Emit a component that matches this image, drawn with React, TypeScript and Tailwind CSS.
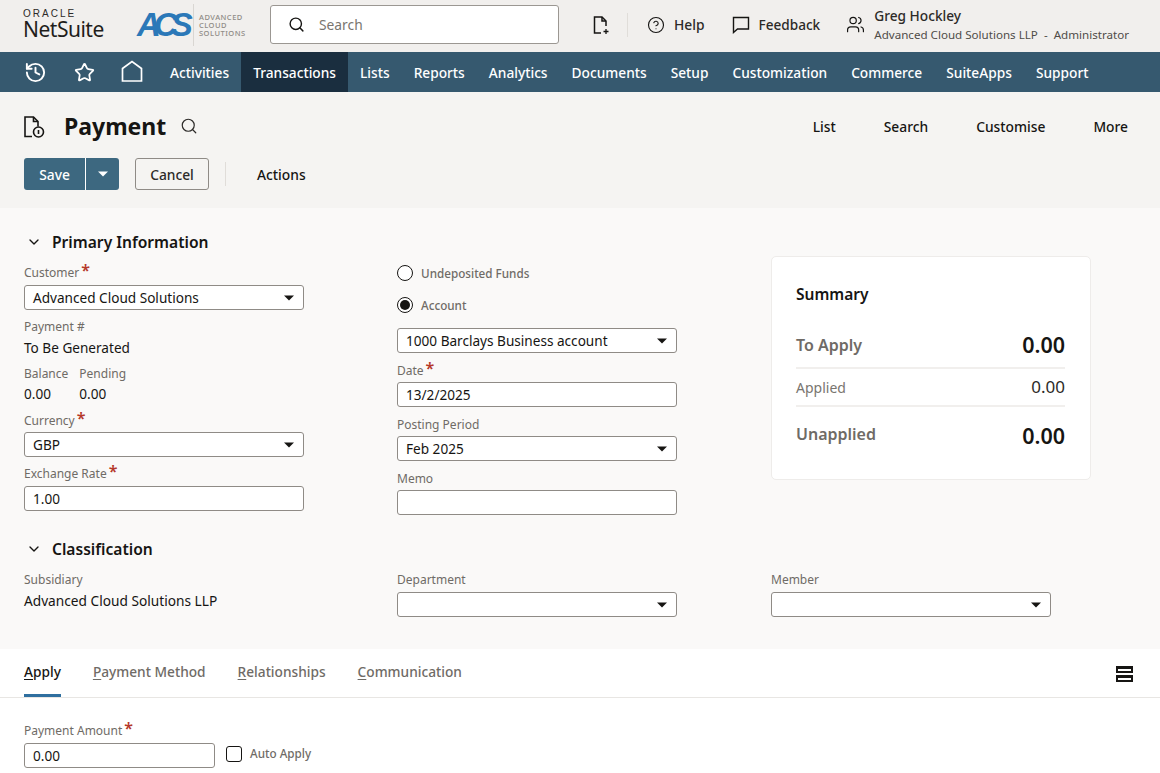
import React from "react";
import { ChevronDown, History, Search, Star, CircleHelp, Users } from "lucide-react";

const Caret = () => (
  <svg width="10" height="6" viewBox="0 0 10 6" className="shrink-0"><path d="M0 0.5h10L5 5.5z" fill="#161513" /></svg>
);

const Lbl = ({ children, req }: { children: React.ReactNode; req?: boolean }) => (
  <div className="flex h-[14px] items-center text-[12px] leading-[14px] text-[#6f6b66]">
    <span>{children}</span>
    {req && <span className="ml-[2px] -mt-[6px] text-[16px] font-semibold leading-[14px] text-[#b5382a]">*</span>}
  </div>
);

const Sel = ({ value, w = "w-[280px]" }: { value?: string; w?: string }) => (
  <div className={`${w} flex h-[25px] items-center justify-between rounded-[3px] border border-[#8f8b86] bg-white pl-2 pr-[9px] text-[13.6px] text-[#161513]`}>
    <span className="pt-[2px]">{value}</span>
    <Caret />
  </div>
);

const Inp = ({ value, w = "w-[280px]" }: { value?: string; w?: string }) => (
  <div className={`${w} flex h-[25px] items-center rounded-[3px] border border-[#8f8b86] bg-white pl-2 pt-[2px] text-[13.6px] text-[#161513]`}>{value}</div>
);

const Section = ({ title }: { title: string }) => (
  <div className="flex h-[20px] items-center">
    <ChevronDown size={16} strokeWidth={2} className="ml-[2px] text-[#161513]" />
    <span className="ml-[10px] pt-[2px] text-[15.6px] font-semibold text-[#161513]">{title}</span>
  </div>
);

const Tab = ({ first, rest, active }: { first: string; rest: string; active?: boolean }) => (
  <div className={`flex h-[48px] items-center border-b-[3px] pt-[1px] text-[13.7px] font-medium ${active ? "border-[#2f6f9f] text-[#161513]" : "border-transparent text-[#6f6b66]"}`}>
    <span><span className="underline underline-offset-2">{first}</span>{rest}</span>
  </div>
);

const navItems = ["Activities", "Transactions", "Lists", "Reports", "Analytics", "Documents", "Setup", "Customization", "Commerce", "SuiteApps", "Support"];

export default function App() {
  return (
    <div className="flex h-[773px] w-[1160px] flex-col overflow-hidden bg-white text-[#161513]" style={{ fontFamily: '"Noto Sans", "Open Sans", sans-serif' }}>
      {/* top bar */}
      <header className="flex h-[52px] shrink-0 items-center bg-[#f1efed] pb-[3px]">
        <div className="ml-[23px] flex w-[84px] flex-col">
          <span className="mb-[1px] text-[10px] leading-[9px] tracking-[2px] text-[#2c2a28]" style={{ fontFamily: '"Liberation Sans", sans-serif' }}>ORACLE</span>
          <span className="text-[21px] leading-[21px] tracking-[-0.5px] text-[#1f1d1b]">NetSuite</span>
        </div>
        <div className="ml-[30px] flex h-[46px] w-[56px] items-center">
          <span className="text-[33px] font-bold italic leading-none tracking-[-7px] text-[#2b78b8]" style={{ fontFamily: '"Liberation Sans", sans-serif' }}>ACS</span>
        </div>
        <div className="h-[42px] w-px bg-[#d9d6d2]" />
        <div className="ml-[5px] flex w-[50px] flex-col text-[7.5px] font-medium leading-[8px] tracking-[0.5px] text-[#8f8b86]">
          <span>ADVANCED</span><span>CLOUD</span><span>SOLUTIONS</span>
        </div>
        <div className="ml-[21px] flex h-[39px] w-[289px] items-center rounded-[3px] border border-[#9b9792] bg-white pl-[17px]">
          <Search size={17} strokeWidth={2} className="text-[#161513]" />
          <span className="ml-[14px] pt-[2px] text-[13.8px] text-[#79756f]">Search</span>
        </div>
        <svg width="18" height="20" viewBox="0 0 18 20" fill="none" stroke="#161513" strokeWidth="1.5" className="ml-[33px]">
          <path d="M9 18H2.5V2H10l4 4v5" /><path d="M10 2v4h4" /><path d="M14 14v5M11.5 16.500h5" strokeWidth="1.3" />
        </svg>
        <div className="ml-[17px] h-[24px] w-px bg-[#e0ddd9]" />
        <CircleHelp size={18} strokeWidth={1.5} className="ml-[19px]" />
        <span className="ml-[9px] pt-[2px] text-[13.8px] font-medium text-[#2c2a28]">Help</span>
        <svg width="18" height="18" viewBox="0 0 18 18" fill="none" stroke="#161513" strokeWidth="1.4" className="ml-[27px]">
          <path d="M1.500 1.500h15v11.500H5.500l-4 3.500z" />
        </svg>
        <span className="ml-[9px] pt-[2px] text-[13.6px] font-medium text-[#2c2a28]">Feedback</span>
        <Users size={19} strokeWidth={1.5} className="ml-[26px]" />
        <div className="ml-[9px] flex flex-col pt-[2px]">
          <span className="text-[13.7px] font-medium leading-[18px] text-[#2c2a28]">Greg Hockley</span>
          <span className="whitespace-nowrap text-[11.6px] leading-[20px] text-[#4f4c48]">Advanced Cloud Solutions LLP&nbsp; -&nbsp; Administrator</span>
        </div>
      </header>

      {/* nav */}
      <nav className="flex h-[40px] shrink-0 items-center bg-[#36596f] text-white">
        <History size={23} strokeWidth={2} className="ml-[24px]" />
        <Star size={21} strokeWidth={2} className="ml-[27px]" />
        <svg width="22" height="22" viewBox="0 0 22 22" fill="none" stroke="white" strokeWidth="1.700" className="ml-[26px] -mt-[2px]">
          <path d="M1.500 21V8.500L11 1.500l9.500 7V21z" />
        </svg>
        <div className="ml-[15px] flex h-full">
          {navItems.map((n) => (
            <div key={n} className={`flex h-full items-center px-3 pt-[2px] text-[13.72px] font-medium ${n === "Transactions" ? "bg-[#1a2e3f]" : ""}`}>{n}</div>
          ))}
        </div>
      </nav>

      {/* page header */}
      <section className="h-[116px] shrink-0 bg-[#f5f4f2] px-6">
        <div className="flex h-[66px] items-center pt-[3px]">
          <svg width="22" height="24" viewBox="0 0 22 24" fill="none" stroke="#161513" strokeWidth="1.600" className="-ml-[1px]">
            <path d="M9 21.500H2V2h8.500L15 6.500v5" /><path d="M10.500 2v4.500H15" /><circle cx="15.500" cy="17" r="5" /><path d="M15.500 15v4" />
          </svg>
          <h1 className="ml-[19px] -mt-[1px] text-[23px] font-bold leading-none">Payment</h1>
          <Search size={18} strokeWidth={1.6} className="ml-[14px] -mt-[2px] text-[#2c2a28]" />
          <div className="ml-auto flex gap-[48px] pr-2 pt-[2px] text-[13.8px] font-medium">
            <span>List</span><span>Search</span><span>Customise</span><span>More</span>
          </div>
        </div>
        <div className="flex items-center">
          <div className="flex h-[32px] overflow-hidden rounded-[3px] bg-[#3d6880] text-white">
            <div className="flex w-[61px] items-center justify-center pt-[2px] text-[13.8px] font-medium">Save</div>
            <div className="flex w-[34px] items-center justify-center border-l border-white">
              <svg width="10" height="6" viewBox="0 0 10 6"><path d="M0 0.500h10L5 5.500z" fill="white" /></svg>
            </div>
          </div>
          <div className="ml-4 flex h-[32px] w-[74px] items-center justify-center rounded-[3px] border border-[#8f8b86] pt-[2px] text-[13.8px] font-medium text-[#2c2a28]">Cancel</div>
          <div className="ml-4 h-[24px] w-px bg-[#e0ddd9]" />
          <span className="ml-[31px] pt-[2px] text-[13.8px] font-medium">Actions</span>
        </div>
      </section>

      {/* form */}
      <section className="h-[441px] shrink-0 bg-[#faf9f8] pl-6 pt-[24px]">
        <Section title="Primary Information" />
        <div className="mt-[12px] flex">
          <div className="w-[373px]">
            <div className="mb-[5px] mt-[2px]"><Lbl req>Customer</Lbl></div>
            <Sel value="Advanced Cloud Solutions" />
            <div className="mt-[10px]"><Lbl>Payment #</Lbl></div>
            <div className="mt-[4px] text-[13.6px] leading-[19px]">To Be Generated</div>
            <div className="mt-[10px] flex gap-[11px]">
              <div><Lbl>Balance</Lbl><div className="mt-[3px] text-[13.6px] leading-[19px]">0.00</div></div>
              <div><Lbl>Pending</Lbl><div className="mt-[3px] text-[13.6px] leading-[19px]">0.00</div></div>
            </div>
            <div className="mb-[4px] mt-[11px]"><Lbl req>Currency</Lbl></div>
            <Sel value="GBP" />
            <div className="mb-[5px] mt-[10px]"><Lbl req>Exchange Rate</Lbl></div>
            <Inp value="1.00" />
          </div>

          <div className="mt-[1px] w-[374px]">
            <div className="flex h-[16px] items-center text-[11.7px] font-medium text-[#6f6b66]">
              <span className="h-4 w-4 rounded-full border border-[#161513] bg-white" />
              <span className="ml-2 pt-[2px]">Undeposited Funds</span>
            </div>
            <div className="mt-[16px] flex h-[16px] items-center text-[11.7px] font-medium text-[#6f6b66]">
              <span className="flex h-4 w-4 items-center justify-center rounded-full border border-[#161513] bg-white">
                <span className="h-[10px] w-[10px] rounded-full bg-[#161513]" />
              </span>
              <span className="ml-2 pt-[2px]">Account</span>
            </div>
            <div className="mt-[15px]"><Sel value="1000 Barclays Business account" /></div>
            <div className="mb-[4px] mt-[11px]"><Lbl req>Date</Lbl></div>
            <Inp value="13/2/2025" />
            <div className="mb-[4px] mt-[11px]"><Lbl>Posting Period</Lbl></div>
            <Sel value="Feb 2025" />
            <div className="mb-[4px] mt-[11px]"><Lbl>Memo</Lbl></div>
            <Inp />
          </div>

          <div className="-mt-[8px] mb-[8px] flex h-[224px] w-[320px] flex-col rounded-[5px] border border-[#eeecea] bg-white pl-6 pr-[25px] pt-[27px]">
            <div className="text-[15.5px] font-semibold leading-[20px]">Summary</div>
            <div className="mt-[20px] flex h-[45px] items-center justify-between border-b-2 border-[#f1efed]">
              <span className="-mt-[2px] text-[16px] font-semibold text-[#6f6b66]">To Apply</span>
              <span className="text-[21.5px] font-semibold">0.00</span>
            </div>
            <div className="flex h-[38px] items-center justify-between border-b-2 border-[#f1efed]">
              <span className="text-[14px] text-[#79756f]">Applied</span>
              <span className="text-[17px] text-[#2c2a28]">0.00</span>
            </div>
            <div className="flex h-[58px] items-center justify-between">
              <span className="-mt-[4px] text-[16px] font-semibold text-[#6f6b66]">Unapplied</span>
              <span className="text-[21.5px] font-semibold">0.00</span>
            </div>
          </div>
        </div>

        <div className="mt-[24px]"><Section title="Classification" /></div>
        <div className="mt-[13px] flex">
          <div className="w-[373px]">
            <div className="pt-[1px]"><Lbl>Subsidiary</Lbl></div>
            <div className="mt-[4px] text-[13.7px] leading-[19px]">Advanced Cloud Solutions LLP</div>
          </div>
          <div className="mt-[1px] w-[374px]">
            <div className="mb-[5px]"><Lbl>Department</Lbl></div>
            <Sel />
          </div>
          <div className="mt-[1px]">
            <div className="mb-[5px]"><Lbl>Member</Lbl></div>
            <Sel />
          </div>
        </div>
      </section>

      {/* tabs */}
      <section className="flex h-[49px] shrink-0 items-start gap-[32px] border-b border-[#e8e6e3] bg-white px-6">
        <Tab first="A" rest="pply" active />
        <Tab first="P" rest="ayment Method" />
        <Tab first="R" rest="elationships" />
        <Tab first="C" rest="ommunication" />
        <div className="ml-auto mr-[3px] mt-[17px] flex flex-col gap-[2px]">
          <span className="h-[7px] w-[17px] border-2 border-t-[3px] border-[#161513]" />
          <span className="h-[7px] w-[17px] border-2 border-t-[3px] border-[#161513]" />
        </div>
      </section>

      {/* apply */}
      <section className="pl-6 pt-[26px]">
        <div className="mb-[5px]"><Lbl req>Payment Amount</Lbl></div>
        <div className="flex items-start">
          <Inp value="0.00" w="w-[191px]" />
          <span className="ml-[11px] mt-[3px] h-4 w-4 rounded-[3px] border border-[#161513] bg-white" />
          <span className="ml-2 mt-[1px] text-[11.7px] font-medium leading-[18px] text-[#6f6b66]">Auto Apply</span>
        </div>
      </section>
    </div>
  );
}
